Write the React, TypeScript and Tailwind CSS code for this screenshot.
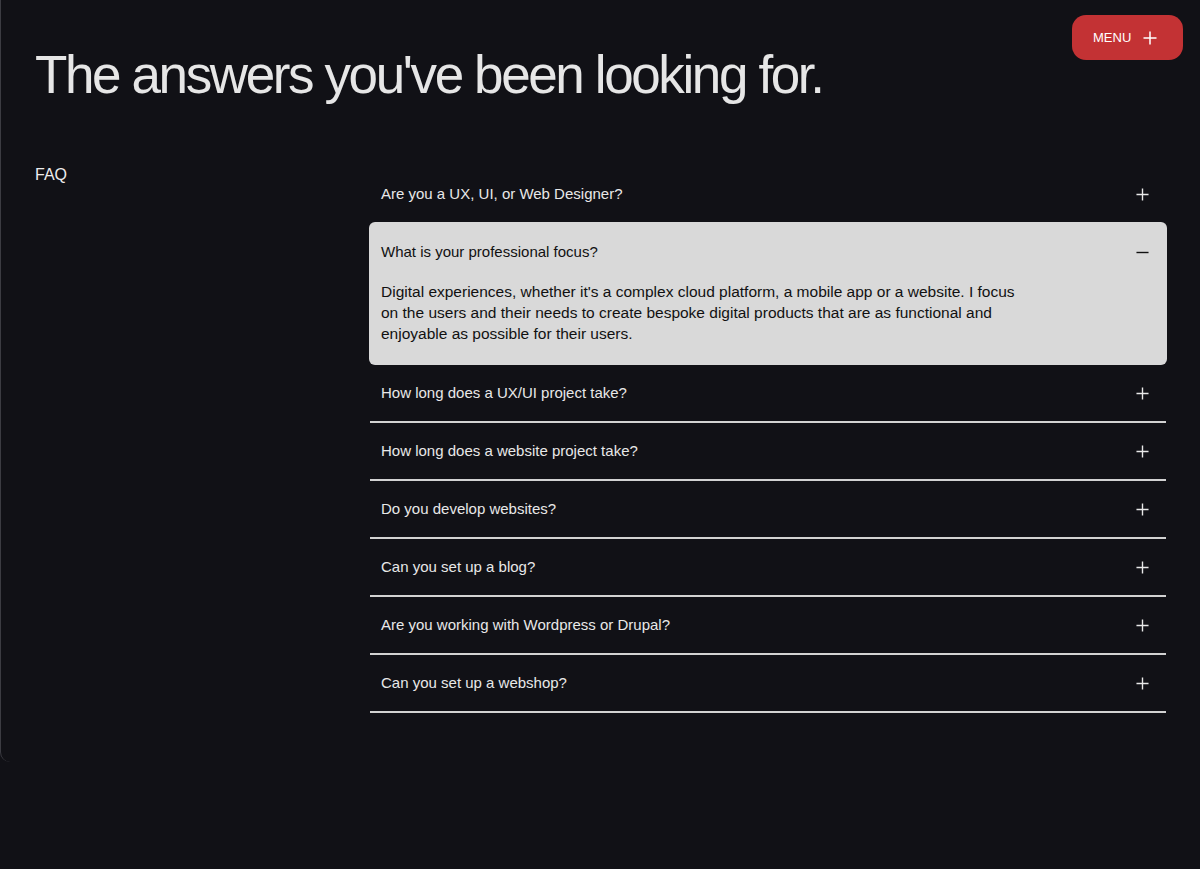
import { useState } from "react";

const faqs = [
  { q: "Are you a UX, UI, or Web Designer?", a: "" },
  {
    q: "What is your professional focus?",
    a: "Digital experiences, whether it's a complex cloud platform, a mobile app or a website. I focus on the users and their needs to create bespoke digital products that are as functional and enjoyable as possible for their users.",
  },
  { q: "How long does a UX/UI project take?", a: "" },
  { q: "How long does a website project take?", a: "" },
  { q: "Do you develop websites?", a: "" },
  { q: "Can you set up a blog?", a: "" },
  { q: "Are you working with Wordpress or Drupal?", a: "" },
  { q: "Can you set up a webshop?", a: "" },
];

function PlusIcon({ className = "" }: { className?: string }) {
  return (
    <svg className={className} viewBox="0 0 14 14" fill="none" stroke="currentColor" strokeWidth={1.5}>
      <path d="M7 0.5v13M0.5 7h13" />
    </svg>
  );
}

function MinusIcon({ className = "" }: { className?: string }) {
  return (
    <svg className={className} viewBox="0 0 14 14" fill="none" stroke="currentColor" strokeWidth={1.5}>
      <path d="M0.5 7h13" />
    </svg>
  );
}

export default function App() {
  const [open, setOpen] = useState(1);

  return (
    <div
      className="min-h-[869px] w-[1200px] bg-[#111116]"
      style={{ fontFamily: '"Liberation Sans", Arial, sans-serif' }}
    >
      <div className="relative h-[762px] border-l border-[#3c3c42] rounded-bl-[10px] pl-[34px] pr-[34px]">
        <button className="absolute top-[15px] right-[17px] flex items-center gap-[12px] h-[45px] w-[111px] pl-[21px] rounded-[14px] bg-[#c33234] text-white text-[13px]">
          MENU
          <PlusIcon className="w-[14px] h-[14px]" />
        </button>

        <h1 className="pt-[48px] text-[53px] leading-none tracking-[-0.045em] text-[#e6e6e6]">
          The answers you've been looking for.
        </h1>

        <div className="mt-[61px] grid grid-cols-[335px_1fr]">
          <div className="pt-px text-[16px] leading-6 text-[#ededed]">FAQ</div>

          <div className="pt-[4px]">
            {faqs.map((f, i) => {
              const isOpen = i === open;
              const nextOpen = i + 1 === open;
              if (isOpen) {
                return (
                  <div
                    key={i}
                    className="-mx-px rounded-[6px] bg-[#d9d9d9] pl-[12px] pr-[18px] pt-[18px] pb-[21px] text-[#111]"
                  >
                    <button
                      onClick={() => setOpen(-1)}
                      className="flex w-full items-center justify-between text-left text-[15px] leading-6"
                    >
                      {f.q}
                      <MinusIcon className="w-[13px] h-[13px]" />
                    </button>
                    <p className="mt-[17px] max-w-[645px] text-[15.5px] leading-[21px]">{f.a}</p>
                  </div>
                );
              }
              return (
                <button
                  key={i}
                  onClick={() => setOpen(i)}
                  className={
                    "flex w-full items-center justify-between pl-[11px] pr-[17px] pt-[16px] pb-[16px] text-left text-[15px] leading-6 text-[#e8e8e8] " +
                    (nextOpen ? "border-b-0" : "border-b-2 border-[#d2d2d2]")
                  }
                >
                  {f.q}
                  <PlusIcon className="w-[13px] h-[13px]" />
                </button>
              );
            })}
          </div>
        </div>
      </div>
    </div>
  );
}
